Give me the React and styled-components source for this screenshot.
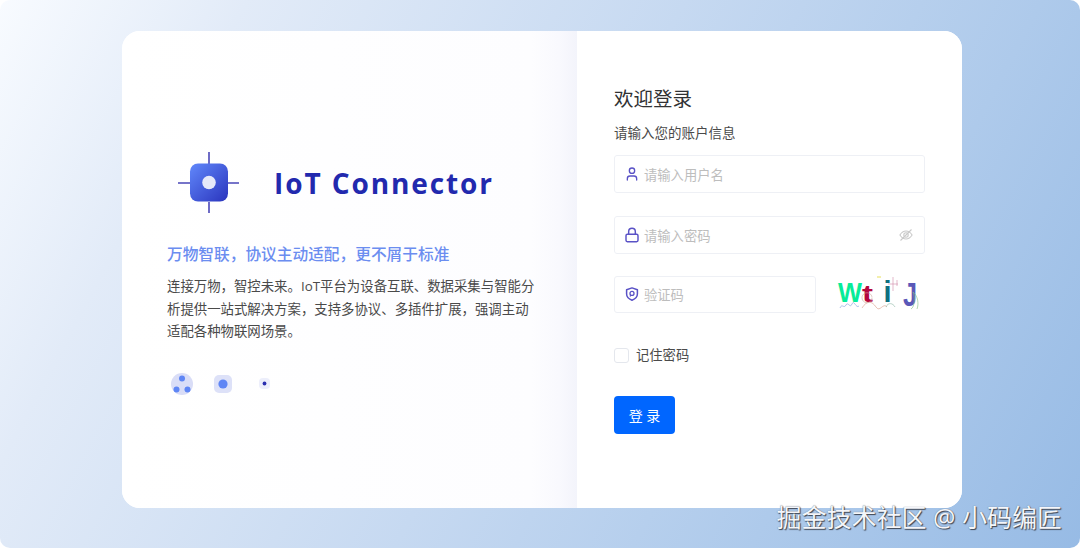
import React from "react";
import styled, { createGlobalStyle } from "styled-components";
import { User, Lock } from "lucide-react";

const GlobalStyle = createGlobalStyle`
    html, body {
        margin: 0;
        padding: 0;
        background: #fff;
    }
    * {
        box-sizing: border-box;
    }
`;

const FONT = `"Open Sans", "Noto Sans CJK SC", sans-serif`;

export default function App() {
    return (
        <>
            <GlobalStyle />
            <Page>
                <Card>
                    <Intro>
                        <Brand>
                            <BrandLogo />
                            <BrandName>IoT Connector</BrandName>
                        </Brand>
                        <Slogan>万物智联，协议主动适配，更不屑于标准</Slogan>
                        <Description>
                            连接万物，智控未来。IoT平台为设备互联、数据采集与智能分析提供一站式解决方案，支持多协议、多插件扩展，强调主动适配各种物联网场景。
                        </Description>
                        <Features>
                            <TriDots />
                            <SquareDot />
                            <TinyDot />
                        </Features>
                    </Intro>
                    <LoginPane>
                        <Title>欢迎登录</Title>
                        <Subtitle>请输入您的账户信息</Subtitle>
                        <Field $after={23.5}>
                            <User size={16} strokeWidth={2} color="#5a52c6" />
                            <Placeholder>请输入用户名</Placeholder>
                        </Field>
                        <Field $after={22}>
                            <Lock size={16} strokeWidth={2.2} color="#5a52c6" />
                            <Placeholder>请输入密码</Placeholder>
                            <EyeToggle>
                                <EyeSlash />
                            </EyeToggle>
                        </Field>
                        <CaptchaRow>
                            <Field $width={202} $after={0}>
                                <ShieldIcon />
                                <Placeholder>验证码</Placeholder>
                            </Field>
                            <Captcha />
                        </CaptchaRow>
                        <Remember>
                            <CheckBox />
                            <span>记住密码</span>
                        </Remember>
                        <SubmitButton>登 录</SubmitButton>
                    </LoginPane>
                </Card>
                <Watermark>掘金技术社区 @ 小码编匠</Watermark>
            </Page>
        </>
    );
}

function BrandLogo() {
    return (
        <LogoSvg width="62" height="62" viewBox="0 0 62 62">
            <defs>
                <linearGradient id="logoFill" x1="0" y1="0" x2="1" y2="1">
                    <stop offset="0" stopColor="#6188fb" />
                    <stop offset="1" stopColor="#2a34bd" />
                </linearGradient>
            </defs>
            <path d="M31 0V12M31 50V61M0 31H12M50 31H61" stroke="#4a47b8" strokeWidth="1.6" />
            <rect x="12" y="11.500" width="38" height="38" rx="8" fill="url(#logoFill)" />
            <circle cx="31" cy="30.500" r="6.800" fill="#e6e9f9" />
        </LogoSvg>
    );
}

function TriDots() {
    return (
        <svg width="22" height="22" viewBox="0 0 22 22">
            <circle cx="11" cy="11" r="11" fill="#d9ddf7" />
            <circle cx="11" cy="5.500" r="3" fill="#5f86f5" />
            <circle cx="5.500" cy="16.500" r="3" fill="#5f86f5" />
            <circle cx="16.500" cy="16.500" r="3" fill="#5f86f5" />
        </svg>
    );
}

function SquareDot() {
    return (
        <svg width="18" height="18" viewBox="0 0 18 18">
            <rect width="18" height="18" rx="5" fill="#dde1f8" />
            <circle cx="9" cy="9" r="4.600" fill="#5f86f5" />
        </svg>
    );
}

function TinyDot() {
    return (
        <TinySvg width="11" height="11" viewBox="0 0 11 11">
            <rect width="11" height="11" rx="4" fill="#eceefb" />
            <circle cx="5.500" cy="5.500" r="1.900" fill="#2a2fb0" />
        </TinySvg>
    );
}

function ShieldIcon() {
    return (
        <svg width="16" height="16" viewBox="-1 -1 16 16" fill="none" stroke="#5a52c6">
            <path d="M7 .9 12.400 2.800V7c0 3-2.300 5-5.400 6.200C3.900 12 1.600 10 1.600 7V2.800Z" strokeWidth="1.500" strokeLinejoin="round" />
            <circle cx="7" cy="6.400" r="2" strokeWidth="1.300" />
            <path d="M5.700 8.400 5 9.500" strokeWidth="1.200" />
        </svg>
    );
}

function EyeSlash() {
    return (
        <svg width="14" height="14" viewBox="0 0 14 14" fill="none" stroke="#c9c9c9" strokeWidth="1.100">
            <path d="M.9 7C2.600 4.300 4.700 3 7 3s4.400 1.300 6.100 4C11.400 9.700 9.300 11 7 11S2.600 9.700.9 7Z" />
            <circle cx="7" cy="7" r="2.200" />
            <path d="M1.500 12.500 12.500 1.500" />
        </svg>
    );
}

function Captcha() {
    return (
        <CaptchaSvg width="90" height="37.5" viewBox="0 0 90 37.5">
            <g fontFamily="'Liberation Sans', sans-serif" fontWeight="700">
                <text x="3" y="26" fontSize="28" fill="#07ec98" textLength="24" lengthAdjust="spacingAndGlyphs">W</text>
                <text x="27" y="26" fontSize="24" fill="#b4063e" textLength="11" lengthAdjust="spacingAndGlyphs">t</text>
                <text x="48.500" y="26" fontSize="29" fill="#10707f">i</text>
                <text x="68" y="30" fontSize="34" fill="#5a58b8" textLength="14" lengthAdjust="spacingAndGlyphs">J</text>
            </g>
            <g fill="none" strokeWidth="0.6">
                <path d="M5 32C7 27 9 33 11 29S15 33 17 28 21 33 24 30" stroke="#7d9bd8" />
                <path d="M27 32C32 24 37 25 41 31S48 26 52 31" stroke="#d99a86" />
                <path d="M37 22A5 5 0 1 1 37 21.500" stroke="#c9a29a" />
                <path d="M51 31C53 26 58 27 60 31" stroke="#8cb7a5" />
                <path d="M53 8H63M58 1V15M62 4V10" stroke="#d08aa8" />
                <path d="M76 33C80 31 80 20 78 16C83 20 84 28 82 33" stroke="#7fbf80" />
                <path d="M42 1H46" stroke="#e7e05a" strokeWidth="1.200" />
            </g>
        </CaptchaSvg>
    );
}

const Page = styled.div`
    position: relative;
    width: 1080px;
    height: 548px;
    padding: 31px 118px 40px 122px;
    border-radius: 10px;
    overflow: hidden;
    background: linear-gradient(118deg, #f8fbff 0%, #e2ebf8 18%, #c6d9f1 50%, #aecaeb 76%, #97bbe5 100%);
    font-family: ${FONT};
`;

const Card = styled.div`
    display: flex;
    width: 840px;
    height: 477px;
    border-radius: 18px;
    overflow: hidden;
    background: #fff;
`;

const Intro = styled.section`
    width: 455px;
    padding: 121px 40px 0 45px;
    background: linear-gradient(90deg, #ffffff 0%, #fdfdff 90%, #f9f9fe 96%, #f3f4fb 100%);
`;

const Brand = styled.div`
    display: flex;
    align-items: center;
    height: 62px;
`;

const LogoSvg = styled.svg`
    margin-left: 11px;
`;

const BrandName = styled.h1`
    margin: 0 0 0 34px;
    font-size: 28px;
    font-weight: 700;
    letter-spacing: 1.9px;
    color: #2229ae;
    white-space: nowrap;
`;

const Slogan = styled.h2`
    margin: 28px 0 0;
    font-size: 15.7px;
    line-height: 24px;
    font-weight: 500;
    color: #6b8df0;
    white-space: nowrap;
`;

const Description = styled.p`
    margin: 9px 0 0;
    width: 372px;
    font-size: 13.4px;
    line-height: 22.5px;
    color: #4a4a4a;
`;

const Features = styled.div`
    display: flex;
    align-items: center;
    margin-top: 30px;
    margin-left: 4px;
    gap: 21px;
`;

const TinySvg = styled.svg`
    margin-left: 6px;
`;

const LoginPane = styled.section`
    flex: 1;
    padding: 54px 37px 0;
    background: #fff;
`;

const Title = styled.h2`
    margin: 0;
    font-size: 19.5px;
    line-height: 28px;
    font-weight: 400;
    color: #303133;
`;

const Subtitle = styled.p`
    margin: 10px 0 12px;
    font-size: 13.5px;
    line-height: 20px;
    color: #4a4a4a;
`;

const Field = styled.div`
    display: flex;
    align-items: center;
    gap: 4px;
    width: ${(props) => props.$width || 311}px;
    height: 37.5px;
    margin-bottom: ${(props) => props.$after}px;
    padding: 0 9px;
    border: 1px solid #eef0f5;
    border-radius: 3px;
    background: #fff;
`;

const Placeholder = styled.span`
    padding-top: 1px;
    font-size: 13.3px;
    color: #bdbdbd;
`;

const EyeToggle = styled.span`
    display: flex;
    margin-left: auto;
    margin-right: 2px;
`;

const CaptchaRow = styled.div`
    display: flex;
    align-items: center;
    gap: 19px;
`;

const CaptchaSvg = styled.svg`
    flex: none;
`;

const Remember = styled.label`
    display: flex;
    align-items: center;
    gap: 7px;
    margin-top: 35px;
    font-size: 13.3px;
    line-height: 15px;
    color: #4a4a4a;
`;

const CheckBox = styled.span`
    width: 15px;
    height: 15px;
    border: 1px solid #e4e7ed;
    border-radius: 3px;
    background: #fff;
`;

const SubmitButton = styled.button`
    display: block;
    width: 61px;
    height: 37.5px;
    margin-top: 33px;
    padding: 0;
    border: 0;
    border-radius: 4px;
    background: #0066ff;
    color: #fff;
    font-family: ${FONT};
    font-size: 14px;
`;

const Watermark = styled.div`
    position: absolute;
    right: 18px;
    bottom: 15px;
    font-size: 25px;
    line-height: 32px;
    color: #f4f6fa;
    text-shadow: 1px 1px 1px #3c4350, 0 0 1px #5a6270;
    white-space: nowrap;
`;
